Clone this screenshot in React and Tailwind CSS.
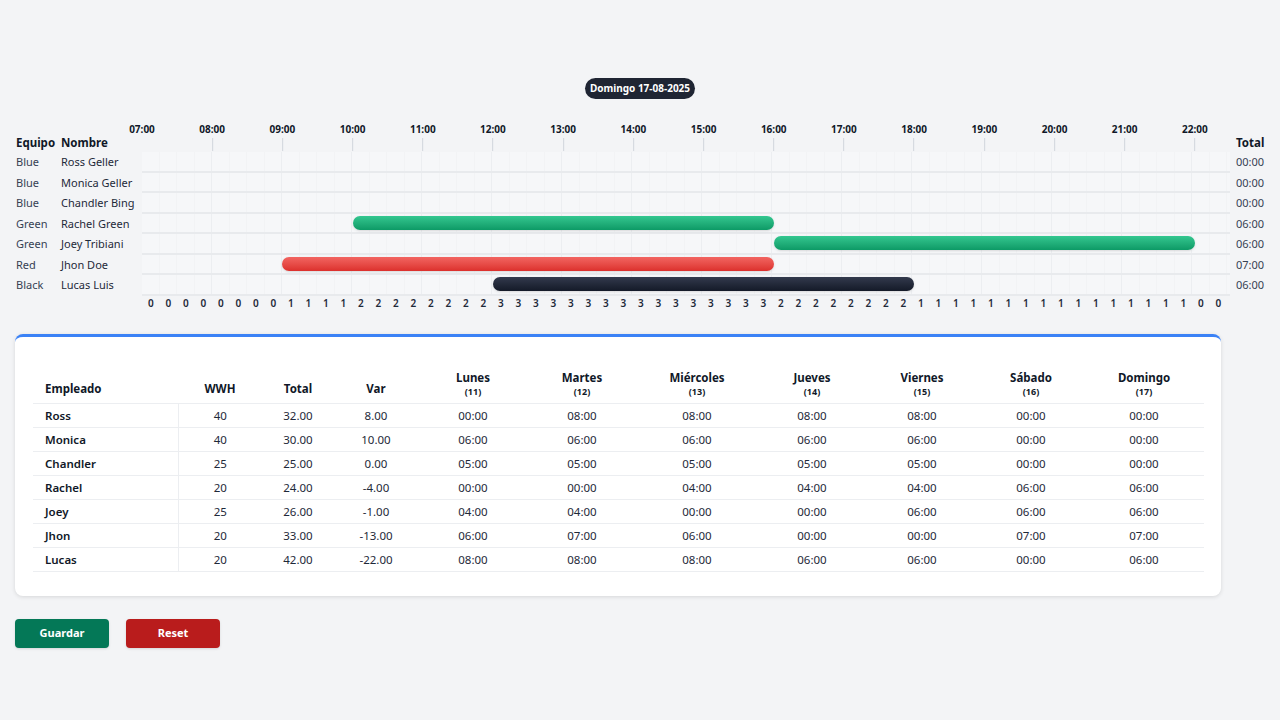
import React from 'react';

const START = 7;
const SPAN = 15.5;
const SLOTS = 62;

const staff = [
  { team: 'Blue', name: 'Ross Geller', total: '00:00', bar: null },
  { team: 'Blue', name: 'Monica Geller', total: '00:00', bar: null },
  { team: 'Blue', name: 'Chandler Bing', total: '00:00', bar: null },
  { team: 'Green', name: 'Rachel Green', total: '06:00', bar: { from: 10, to: 16, tone: 'green' } },
  { team: 'Green', name: 'Joey Tribiani', total: '06:00', bar: { from: 16, to: 22, tone: 'green' } },
  { team: 'Red', name: 'Jhon Doe', total: '07:00', bar: { from: 9, to: 16, tone: 'red' } },
  { team: 'Black', name: 'Lucas Luis', total: '06:00', bar: { from: 12, to: 18, tone: 'black' } },
];

const tones = {
  green: 'bg-gradient-to-b from-[#33c790] to-[#0c9a66]',
  red: 'bg-gradient-to-b from-[#f26461] to-[#dc2f2c]',
  black: 'bg-gradient-to-b from-[#333a4d] to-[#141a28]',
};

const hours = Array.from({ length: 16 }, (_, i) => START + i);

// people on shift per quarter hour
const counts = Array.from({ length: SLOTS }, (_, i) => {
  const t = START + i / 4;
  return staff.filter((s) => s.bar && t >= s.bar.from && t < s.bar.to).length;
});

const days = [
  ['Lunes', '11'],
  ['Martes', '12'],
  ['Miércoles', '13'],
  ['Jueves', '14'],
  ['Viernes', '15'],
  ['Sábado', '16'],
  ['Domingo', '17'],
];

const rows = [
  ['Ross', 40, '32.00', '8.00', ['00:00', '08:00', '08:00', '08:00', '08:00', '00:00', '00:00']],
  ['Monica', 40, '30.00', '10.00', ['06:00', '06:00', '06:00', '06:00', '06:00', '00:00', '00:00']],
  ['Chandler', 25, '25.00', '0.00', ['05:00', '05:00', '05:00', '05:00', '05:00', '00:00', '00:00']],
  ['Rachel', 20, '24.00', '-4.00', ['00:00', '00:00', '04:00', '04:00', '04:00', '06:00', '06:00']],
  ['Joey', 25, '26.00', '-1.00', ['04:00', '04:00', '00:00', '00:00', '06:00', '06:00', '06:00']],
  ['Jhon', 20, '33.00', '-13.00', ['06:00', '07:00', '06:00', '00:00', '00:00', '07:00', '07:00']],
  ['Lucas', 20, '42.00', '-22.00', ['08:00', '08:00', '08:00', '06:00', '06:00', '00:00', '06:00']],
];

const colWidths = [145, 84, 72, 84, 110, 108, 122, 108, 112, 106, 120];

const pad = (h) => `${String(h).padStart(2, '0')}:00`;
const pct = (h) => `${((h - START) / SPAN) * 100}%`;

function TimelineRow({ person }) {
  return (
    <div className="flex h-[20.5px] items-center">
      <div className="w-[45px] text-gray-700">{person.team}</div>
      <div className="w-[81px] text-gray-800">{person.name}</div>
      <div className="relative flex h-full w-[1088px] border-b-2 border-[#e8eaed] bg-[#f6f7f9]">
        {Array.from({ length: SLOTS }, (_, i) => (
          <div
            key={i}
            className={`h-full w-[17.5px] ${i % 4 === 3 ? 'border-r border-[#eceef1]' : 'border-r border-[#f2f3f5]'}`}
          />
        ))}
        {person.bar && (
          <div
            className={`absolute top-1/2 h-[14px] -translate-y-1/2 rounded-full shadow-sm ${tones[person.bar.tone]}`}
            style={{ left: pct(person.bar.from), width: `${((person.bar.to - person.bar.from) / SPAN) * 100}%` }}
          />
        )}
      </div>
      <div className="pl-[6px] text-gray-700">{person.total}</div>
    </div>
  );
}

export default function App() {
  return (
    <div
      className="min-h-screen bg-[#f3f4f6] pl-[15px] text-[11px] text-gray-800"
      style={{ fontFamily: '"Noto Sans", "Open Sans", sans-serif' }}
    >
      <div className="flex w-[1250px] justify-center pt-[78px]">
        <span className="rounded-full bg-[#1f2533] px-[5px] py-[3px] text-[10px] font-bold text-white">
          Domingo 17-08-2025
        </span>
      </div>

      <div className="ml-[1px]">
        <div className="mt-[19px] flex h-[33px] items-end">
          <div className="w-[45px] text-[11.5px] font-bold text-gray-900">Equipo</div>
          <div className="w-[81px] text-[11.5px] font-bold text-gray-900">Nombre</div>
          <div className="relative h-full w-[1088px]">
            {hours.map((h, i) => (
              <div
                key={h}
                className="absolute top-[4px] flex -translate-x-1/2 flex-col items-center"
                style={{ left: pct(h) }}
              >
                <span className="text-[10px] leading-[14px] font-bold text-gray-900">{pad(h)}</span>
                {i > 0 && <span className="mt-[2px] h-[13px] w-px bg-gray-300" />}
              </div>
            ))}
          </div>
          <div className="pl-[6px] text-[11.5px] font-bold text-gray-900">Total</div>
        </div>

        <div className="mt-[1px]">
          {staff.map((p) => (
            <TimelineRow key={p.name} person={p} />
          ))}
        </div>

        <div className="ml-[126px] flex">
          {counts.map((c, i) => (
            <div key={i} className="w-[17.5px] text-center text-[10px] font-semibold text-gray-800">
              {c}
            </div>
          ))}
        </div>
      </div>

      <div className="mt-[23px] w-[1206px] rounded-lg border-t-[3px] border-[#3b82f6] bg-white px-[18px] pb-[24px] pt-[18px] shadow-[0_1px_4px_rgba(0,0,0,0.12)]">
        <table className="w-[1170px] table-fixed border-collapse">
          <colgroup>
            {colWidths.map((w, i) => (
              <col key={i} style={{ width: w }} />
            ))}
          </colgroup>
          <thead>
            <tr className="h-[49px] border-b border-[#eceef1]">
              <th className="px-3 pb-[6px] text-left align-bottom text-[11.5px] font-bold text-gray-900">Empleado</th>
              <th className="pb-[6px] align-bottom text-[11.5px] font-bold text-gray-900">WWH</th>
              <th className="pb-[6px] align-bottom text-[11.5px] font-bold text-gray-900">Total</th>
              <th className="pb-[6px] align-bottom text-[11.5px] font-bold text-gray-900">Var</th>
              {days.map(([d, n]) => (
                <th key={d} className="pb-[5px] align-bottom font-bold text-gray-900">
                  <div className="text-[11.5px] leading-[15px]">{d}</div>
                  <div className="text-[9px] leading-[13px]">({n})</div>
                </th>
              ))}
            </tr>
          </thead>
          <tbody>
            {rows.map(([name, wwh, total, v, week]) => (
              <tr key={name} className="h-[24px] border-b border-[#eceef1] text-[11.5px]">
                <td className="border-r border-[#eceef1] px-3 font-semibold text-gray-900">{name}</td>
                <td className="text-center">{wwh}</td>
                <td className="text-center">{total}</td>
                <td className="text-center">{v}</td>
                {week.map((t, i) => (
                  <td key={i} className="text-center">
                    {t}
                  </td>
                ))}
              </tr>
            ))}
          </tbody>
        </table>
      </div>

      <div className="mt-[23px] flex gap-[17px]">
        <button className="h-[29px] w-[94px] rounded bg-[#047857] text-[11px] font-bold text-white shadow-sm">Guardar</button>
        <button className="h-[29px] w-[94px] rounded bg-[#b91c1c] text-[11px] font-bold text-white shadow-sm">Reset</button>
      </div>
    </div>
  );
}
